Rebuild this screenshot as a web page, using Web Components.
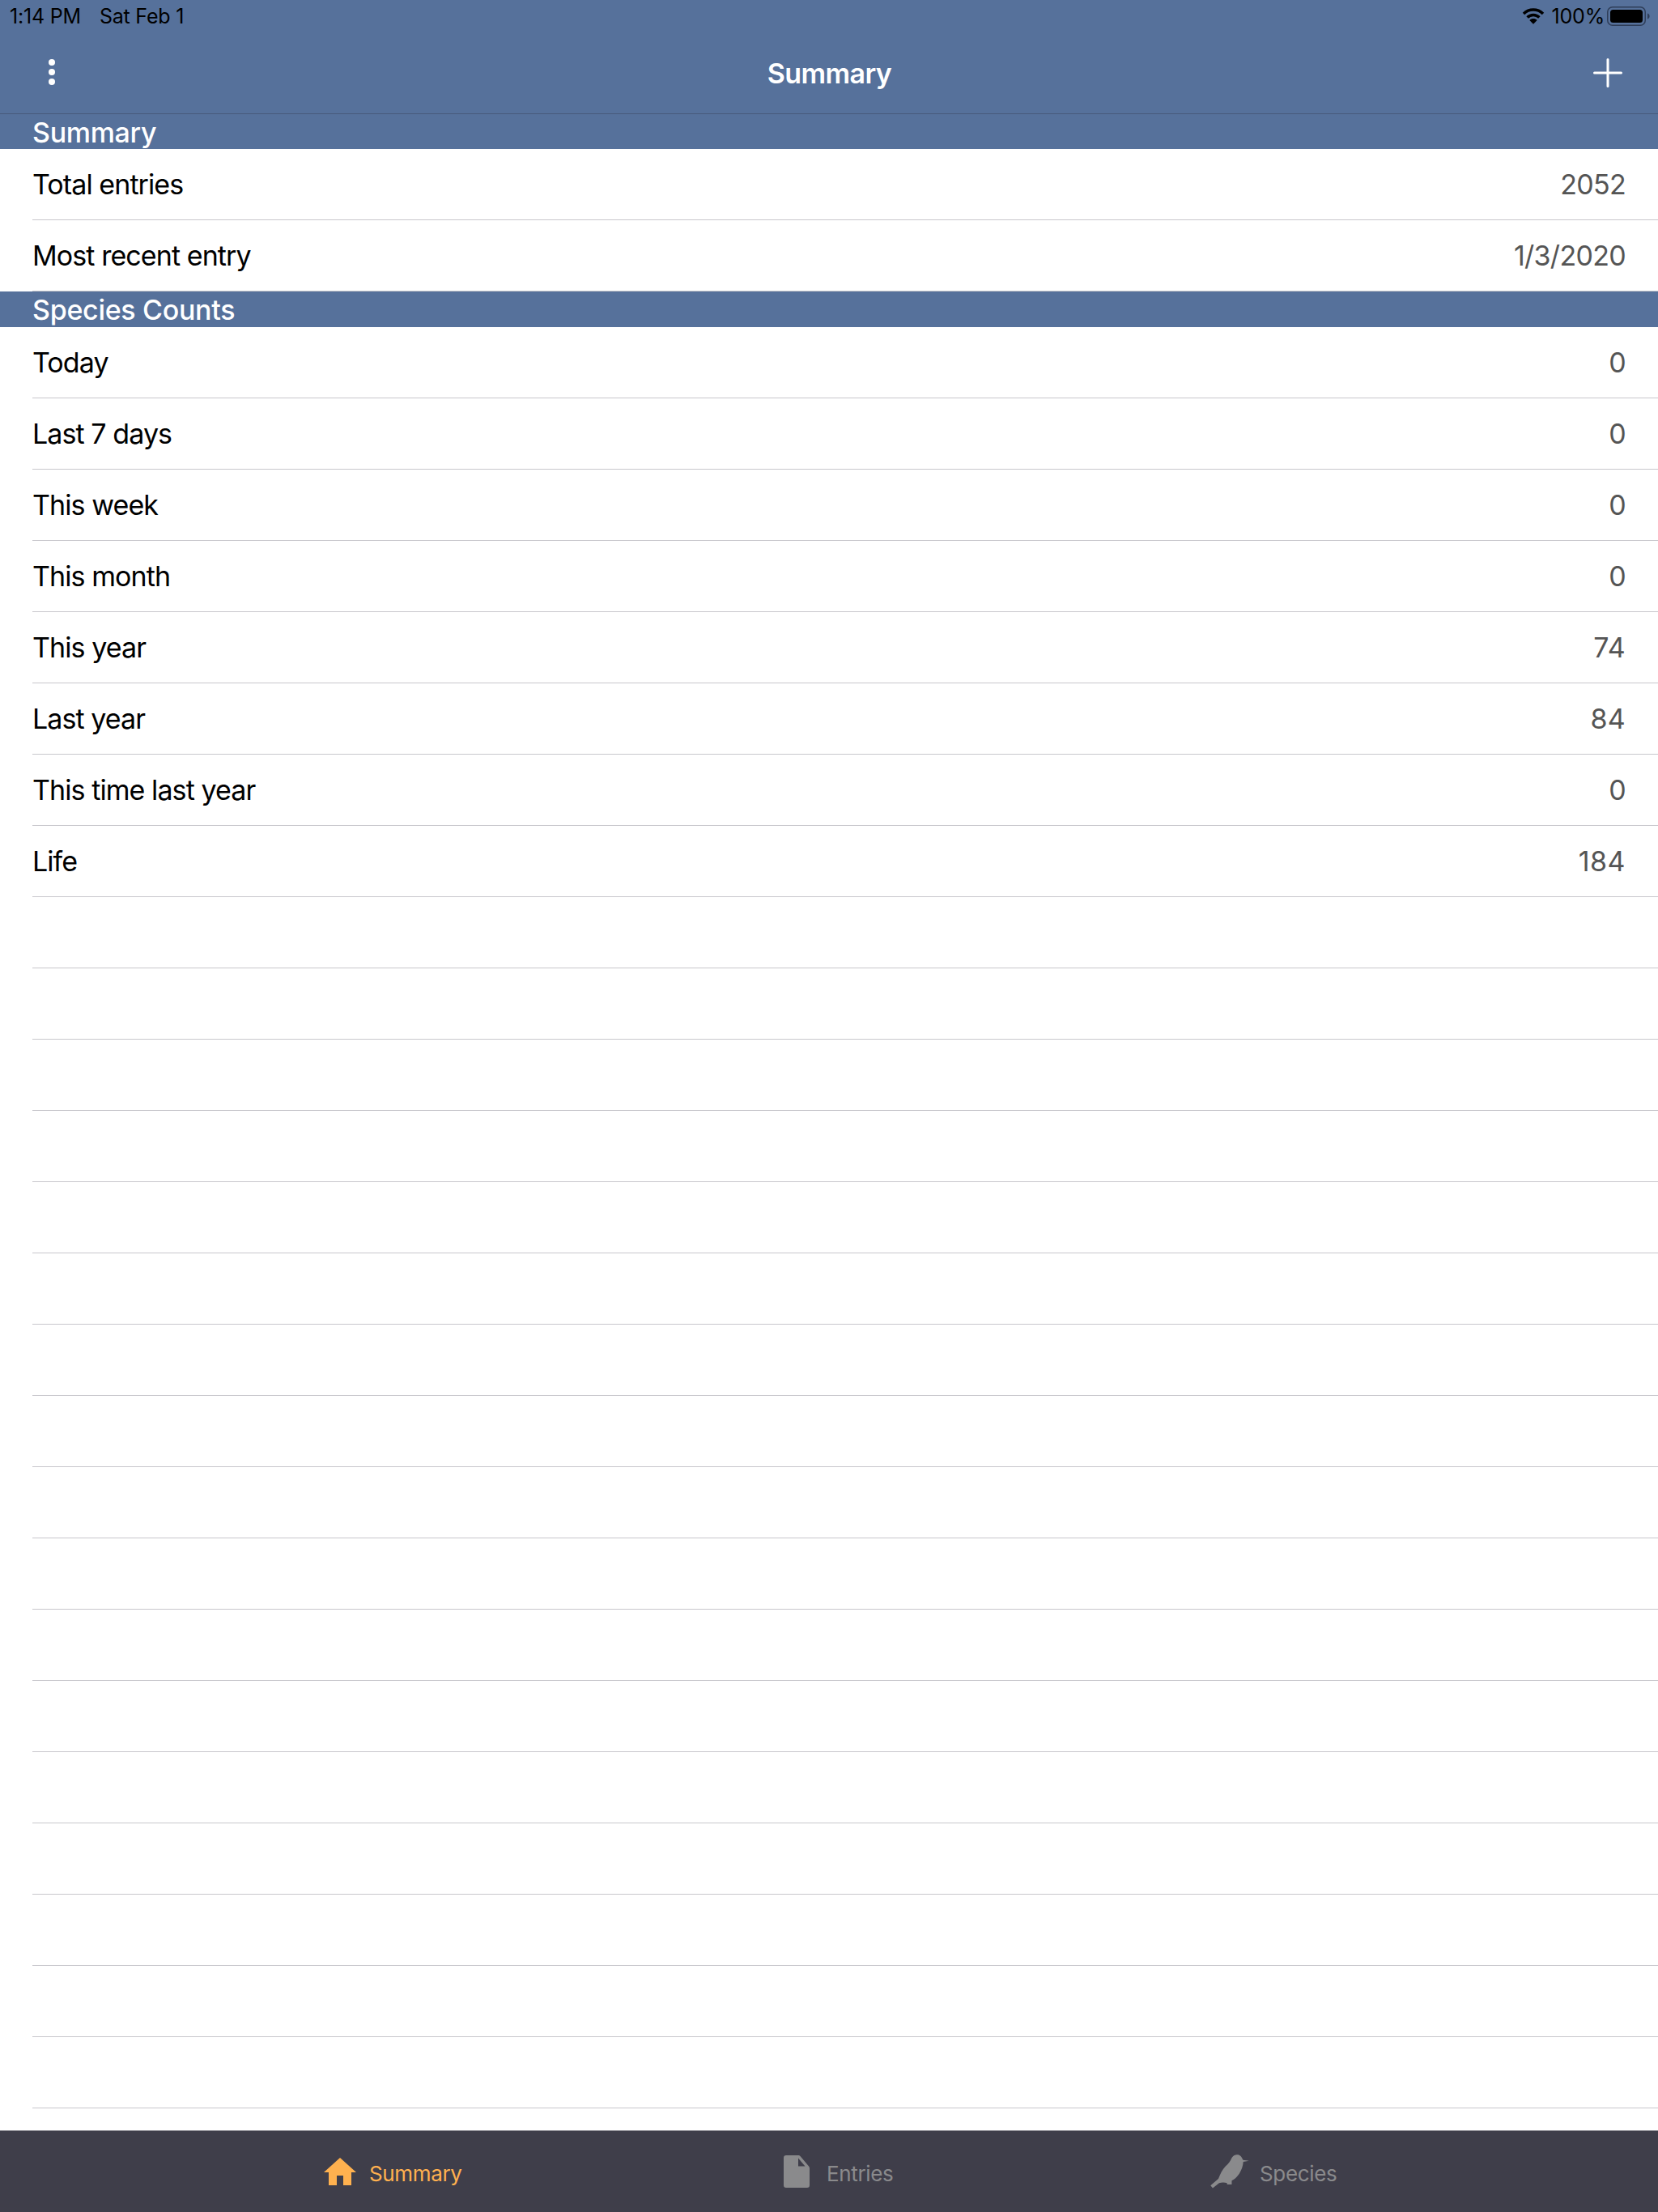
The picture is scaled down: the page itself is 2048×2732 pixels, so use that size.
<!DOCTYPE html>
<html lang="en"><head><meta charset="utf-8"><title>Summary</title>
<style>
html,body{margin:0;padding:0;background:#fff;}
body{font-family:Inter,"Liberation Sans",sans-serif;width:2048px;height:2732px;overflow:hidden;}
app-shell{--blue:#56719b;}
</style></head>
<body>
<app-shell>
  <status-bar slot="top"></status-bar>
  <nav-bar slot="top">Summary</nav-bar>
  <section-header>Summary</section-header>
  <list-row>Total entries<span slot="value">2052</span></list-row>
  <list-row>Most recent entry<span slot="value">1/3/2020</span></list-row>
  <section-header>Species Counts</section-header>
  <list-row>Today<span slot="value">0</span></list-row>
  <list-row>Last 7 days<span slot="value">0</span></list-row>
  <list-row>This week<span slot="value">0</span></list-row>
  <list-row>This month<span slot="value">0</span></list-row>
  <list-row>This year<span slot="value" style="letter-spacing:.3px">74</span></list-row>
  <list-row>Last year<span slot="value" style="letter-spacing:.3px">84</span></list-row>
  <list-row>This time last year<span slot="value">0</span></list-row>
  <list-row>Life<span slot="value" style="letter-spacing:.45px">184</span></list-row>
  <list-row></list-row><list-row></list-row><list-row></list-row><list-row></list-row><list-row></list-row>
  <list-row></list-row><list-row></list-row><list-row></list-row><list-row></list-row><list-row></list-row>
  <list-row></list-row><list-row></list-row><list-row></list-row><list-row></list-row><list-row></list-row>
  <list-row></list-row><list-row></list-row>
  <tab-bar slot="bottom">
    <tab-item active label="Summary" style="--gap:16px"><svg slot="icon" width="40" height="34" viewBox="0 0 40 34"><path fill="currentColor" d="M20 0 40 18H34V34H24V22H16V34H6V18H0Z"/></svg></tab-item>
    <tab-item label="Entries" style="--gap:21px"><svg slot="icon" width="32" height="40" viewBox="0 0 32 40"><path fill="currentColor" fill-rule="evenodd" d="M3 0H18C19 0 20 .5 20.700 1.300L31 13.500C31.700 14.300 32 15 32 16V37a3 3 0 0 1-3 3H3a3 3 0 0 1-3-3V3a3 3 0 0 1 3-3ZM18 3.500V13.500H26.500Z"/></svg></tab-item>
    <tab-item label="Species" style="--gap:13px"><svg slot="icon" width="48" height="42" viewBox="75 75 145 126"><path fill="currentColor" d="M76 190 105 165C112 148 120 130 131 119 143 109 150 100 154 89 159 79 167 75 176 75 185 75 193 83 197 95L219 98 198 102C197 117 192 132 183 146 175 158 165 167 155 172V186H138L137 181C128 178 118 178 108 181L84 200Z"/></svg></tab-item>
  </tab-bar>
</app-shell>
<script>
function def(name, html, init){
  customElements.define(name, class extends HTMLElement{
    constructor(){super();const r=this.attachShadow({mode:'open'});r.innerHTML=html; if(init) init(this,r);}
  });
}
def('app-shell',`<style>
:host{display:flex;flex-direction:column;width:2048px;height:2732px;background:#fff;}
.top{display:block;background:var(--blue);}
.main{flex:1;display:flex;flex-direction:column;min-height:0;overflow:hidden;}
</style><div class="top"><slot name="top"></slot></div><div class="main"><slot></slot></div><slot name="bottom"></slot>`);
def('status-bar',`<style>
:host{display:flex;align-items:center;justify-content:space-between;height:40px;padding:0 10px 0 12px;font:400 25px Inter,"Liberation Sans",sans-serif;color:#000;letter-spacing:-.2px;}
.l,.r{display:flex;align-items:center;}
.d{margin-left:23px}
.wifi{margin-right:9px}
.pct{margin-right:3px}
</style><div class="l"><span>1:14 PM</span><span class="d">Sat Feb 1</span></div>
<div class="r"><svg class="wifi" width="28" height="20" viewBox="0 0 28 20"><path d="M2 7C8.700 .4 19.300 .4 26 7M6.600 11.600C10.700 7.500 17.300 7.500 21.400 11.600" fill="none" stroke="#000" stroke-width="3.500"/><path d="M14 19.800 9.300 15C12 12.400 16 12.400 18.700 15Z"/></svg><span class="pct">100%</span>
<svg width="53" height="24" viewBox="0 0 53 24"><rect x=".75" y=".75" width="46.500" height="22.500" rx="6" fill="none" stroke="#2f3e59" stroke-width="1.500"/><rect x="4" y="4" width="40" height="16" rx="3.500" fill="#000"/><path d="M50 8.500c1.600.5 2.600 1.800 2.600 3.500s-1 3-2.600 3.500Z" fill="#2f3e59"/></svg></div>`);
def('nav-bar',`<style>
:host{display:flex;align-items:center;justify-content:space-between;height:100px;box-sizing:content-box;border-bottom:1px solid #47597a;padding:0 44px 0 60px;color:#fff;position:relative;font:600 34px Inter,"Liberation Sans",sans-serif;letter-spacing:-.6px;}
.title{flex:1;text-align:center;padding-left:13px;}
</style><svg width="8" height="32" viewBox="0 0 8 32" style="margin-top:-2px"><circle cx="4" cy="4" r="4" fill="#fff"/><circle cx="4" cy="16" r="4" fill="#fff"/><circle cx="4" cy="28" r="4" fill="#fff"/></svg>
<div class="title"><slot></slot></div>
<svg width="36" height="36" viewBox="0 0 36 36"><path d="M18 1.500V34.500M1.500 18H34.500" stroke="#fff" stroke-width="3" stroke-linecap="round" fill="none"/></svg>`);
def('section-header',`<style>
:host{display:flex;align-items:center;height:44px;box-sizing:border-box;padding:2px 40px 0;flex:none;background:var(--blue);color:#fff;font:500 34px/42px Inter,"Liberation Sans",sans-serif;letter-spacing:-.3px;}
:host(:first-of-type){height:43px;}
</style><slot></slot>`);
def('list-row',`<style>
:host{display:block;flex:none;height:88px;padding-left:40px;box-sizing:border-box;font:400 34px Inter,"Liberation Sans",sans-serif;letter-spacing:-.92px;color:#000;background:#fff;}
.in{display:flex;align-items:center;justify-content:space-between;height:87px;border-bottom:1px solid #c8c7cc;padding-right:40px;}
.v{color:#555;letter-spacing:-.7px;}
</style><div class="in"><span><slot></slot></span><span class="v"><slot name="value"></slot></span></div>`);
def('tab-bar',`<style>
:host{display:grid;grid-template-columns:568px 527px 1fr;align-items:center;height:100px;border-top:1px solid #8e8d94;padding-left:400px;background:#3f3e4a;flex:none;}
</style><slot></slot>`);
def('tab-item',`<style>
:host{display:flex;align-items:center;color:#8a8a8c;font:400 26px Inter,"Liberation Sans",sans-serif;letter-spacing:-.35px;}
:host([active]){color:#ffb14f;}
.l{margin-left:var(--gap,15px);position:relative;top:2px}
::slotted(svg){display:block;}
</style><slot name="icon"></slot><span class="l"></span>`,(el,r)=>{r.querySelector('.l').textContent=el.getAttribute('label')||'';});
</script>
</body></html>
